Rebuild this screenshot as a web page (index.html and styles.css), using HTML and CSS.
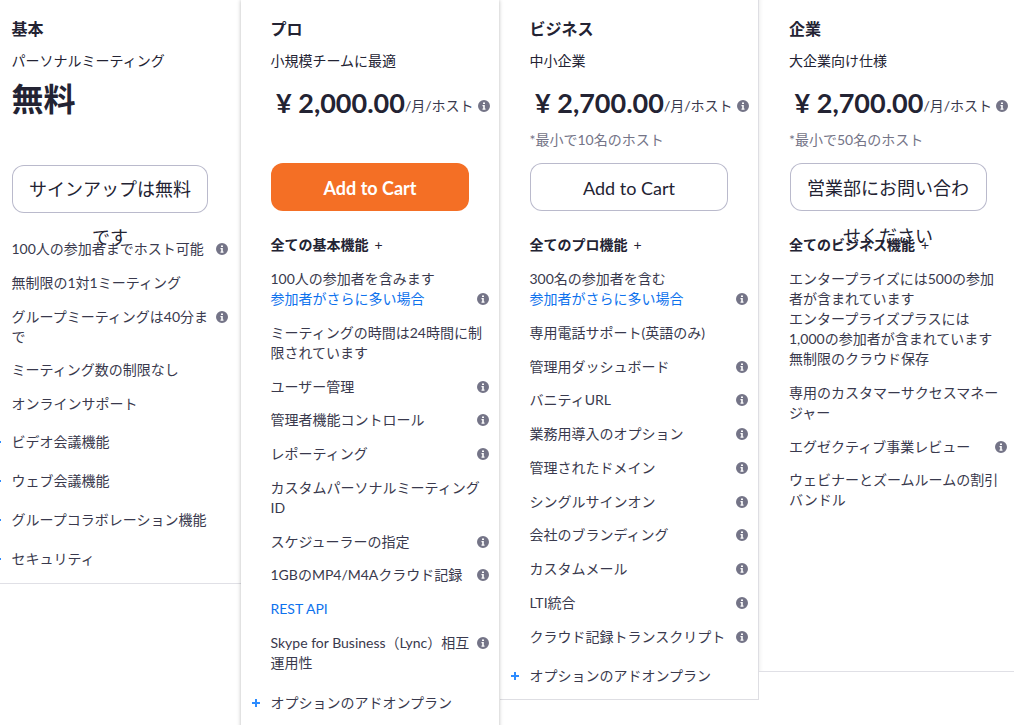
FILE: index.html
```html
<!DOCTYPE html>
<html lang="ja">
<head>
<meta charset="utf-8">
<title>プラン</title>
<link rel="stylesheet" href="styles.css">
</head>
<body>
<svg class="defs" width="0" height="0" aria-hidden="true"><defs>
<symbol id="info" viewBox="0 0 12 12"><path fill-rule="evenodd" d="M6 0a6 6 0 1 1 0 12A6 6 0 0 1 6 0zM5 2.400v1.700h2V2.400zM4.500 5.100v1.100h.7v2.400h-.7v1.100h3v-1.100h-.7V5.100z"/></symbol>
</defs></svg>
<main class="plans">
  <section class="plan plan-basic">
    <h2 class="plan-name">基本</h2>
    <p class="plan-sub">パーソナルミーティング</p>
    <p class="price-free">無料</p>
    <a class="btn btn-basic">サインアップは無料です</a>
    <ul class="features features-basic">
      <li class="row"><span class="row-text">100人の参加者までホスト可能</span><svg class="info"><use href="#info"/></svg></li>
      <li class="row"><span class="row-text">無制限の1対1ミーティング</span></li>
      <li class="row"><span class="row-text">グループミーティングは40分まで</span><svg class="info"><use href="#info"/></svg></li>
      <li class="row"><span class="row-text">ミーティング数の制限なし</span></li>
      <li class="row"><span class="row-text">オンラインサポート</span></li>
    </ul>
    <ul class="addons">
      <li class="addon"><span class="plus"></span>ビデオ会議機能</li>
      <li class="addon"><span class="plus"></span>ウェブ会議機能</li>
      <li class="addon"><span class="plus"></span>グループコラボレーション機能</li>
      <li class="addon"><span class="plus"></span>セキュリティ</li>
    </ul>
  </section>

  <section class="plan plan-pro">
    <h2 class="plan-name">プロ</h2>
    <p class="plan-sub">小規模チームに最適</p>
    <div class="price"><span class="amount">¥ 2,000.00</span><span class="per">/月/ホスト</span><svg class="info"><use href="#info"/></svg></div>
    <div class="note"></div>
    <a class="btn btn-primary">Add to Cart</a>
    <h3 class="all">全ての基本機能<span class="all-plus">+</span></h3>
    <ul class="features">
      <li class="row"><span class="row-text">100人の参加者を含みます<br><span class="link">参加者がさらに多い場合</span></span><svg class="info info-low"><use href="#info"/></svg></li>
      <li class="row"><span class="row-text">ミーティングの時間は24時間に制限されています</span></li>
      <li class="row"><span class="row-text">ユーザー管理</span><svg class="info"><use href="#info"/></svg></li>
      <li class="row"><span class="row-text">管理者機能コントロール</span><svg class="info"><use href="#info"/></svg></li>
      <li class="row"><span class="row-text">レポーティング</span><svg class="info"><use href="#info"/></svg></li>
      <li class="row"><span class="row-text">カスタムパーソナルミーティングID</span></li>
      <li class="row"><span class="row-text">スケジューラーの指定</span><svg class="info"><use href="#info"/></svg></li>
      <li class="row"><span class="row-text">1GBのMP4/M4Aクラウド記録</span><svg class="info"><use href="#info"/></svg></li>
      <li class="row"><span class="row-text link">REST API</span></li>
      <li class="row"><span class="row-text">Skype for Business（Lync）相互運用性</span><svg class="info"><use href="#info"/></svg></li>
    </ul>
    <ul class="addons addons-paid">
      <li class="addon"><span class="plus"></span>オプションのアドオンプラン</li>
    </ul>
  </section>

  <section class="plan plan-business">
    <h2 class="plan-name">ビジネス</h2>
    <p class="plan-sub">中小企業</p>
    <div class="price"><span class="amount">¥ 2,700.00</span><span class="per">/月/ホスト</span><svg class="info"><use href="#info"/></svg></div>
    <div class="note">*最小で10名のホスト</div>
    <a class="btn">Add to Cart</a>
    <h3 class="all">全てのプロ機能<span class="all-plus">+</span></h3>
    <ul class="features">
      <li class="row"><span class="row-text">300名の参加者を含む<br><span class="link">参加者がさらに多い場合</span></span><svg class="info info-low"><use href="#info"/></svg></li>
      <li class="row"><span class="row-text">専用電話サポート(英語のみ)</span></li>
      <li class="row"><span class="row-text">管理用ダッシュボード</span><svg class="info"><use href="#info"/></svg></li>
      <li class="row"><span class="row-text">バニティURL</span><svg class="info"><use href="#info"/></svg></li>
      <li class="row"><span class="row-text">業務用導入のオプション</span><svg class="info"><use href="#info"/></svg></li>
      <li class="row"><span class="row-text">管理されたドメイン</span><svg class="info"><use href="#info"/></svg></li>
      <li class="row"><span class="row-text">シングルサインオン</span><svg class="info"><use href="#info"/></svg></li>
      <li class="row"><span class="row-text">会社のブランディング</span><svg class="info"><use href="#info"/></svg></li>
      <li class="row"><span class="row-text">カスタムメール</span><svg class="info"><use href="#info"/></svg></li>
      <li class="row"><span class="row-text">LTI統合</span><svg class="info"><use href="#info"/></svg></li>
      <li class="row"><span class="row-text">クラウド記録トランスクリプト</span><svg class="info"><use href="#info"/></svg></li>
    </ul>
    <ul class="addons addons-paid">
      <li class="addon"><span class="plus"></span>オプションのアドオンプラン</li>
    </ul>
  </section>

  <section class="plan plan-enterprise">
    <h2 class="plan-name">企業</h2>
    <p class="plan-sub">大企業向け仕様</p>
    <div class="price"><span class="amount">¥ 2,700.00</span><span class="per">/月/ホスト</span><svg class="info"><use href="#info"/></svg></div>
    <div class="note">*最小で50名のホスト</div>
    <a class="btn btn-enterprise">営業部にお問い合わせください</a>
    <h3 class="all">全てのビジネス機能<span class="all-plus">+</span></h3>
    <ul class="features">
      <li class="row"><span class="row-text">エンタープライズには500の参加者が含まれています<br>エンタープライズプラスには<br>1,000の参加者が含まれています<br>無制限のクラウド保存</span></li>
      <li class="row"><span class="row-text">専用のカスタマーサクセスマネージャー</span></li>
      <li class="row"><span class="row-text">エグゼクティブ事業レビュー</span><svg class="info"><use href="#info"/></svg></li>
      <li class="row"><span class="row-text">ウェビナーとズームルームの割引バンドル</span></li>
    </ul>
  </section>
</main>
</body>
</html>
```

FILE: styles.css
```css
* { box-sizing: border-box; }
html, body { margin: 0; height: 725px; overflow: hidden; background: #fff; }
body {
  font-family: Lato, "Noto Sans CJK JP", sans-serif;
  font-size: 14px;
  line-height: 20px;
  color: #232333;
}
.defs { display: block; height: 0; }
ul, h2, h3, p { margin: 0; padding: 0; list-style: none; }

.plans { display: flex; align-items: flex-start; margin-left: -18px; width: 1100px; }
.plan { width: 259px; padding: 19px 0 0 29.500px; flex: none; background: #fff; }
.plan-basic { height: 584px; border-bottom: 1px solid #e0e0e6; }
.plan-pro { height: 760px; position: relative; z-index: 2; box-shadow: 0 0 4px rgba(0, 0, 0, .28); width: 258px; margin-right: 1px; }
.plan-business { height: 700px; width: 259px; border-right: 1px solid #dedee3; border-bottom: 1px solid #dedee3; position: relative; z-index: 1; }
.plan-enterprise { height: 672px; width: 300px; padding-left: 30px; border-bottom: 1px solid #e0e0e6; box-shadow: inset 5px 0 5px -5px rgba(0,0,0,.1); }

.plan-name { font-size: 16px; line-height: 20px; font-weight: 700; }
.plan-sub { margin-top: 12px; }
.price-free { margin-top: 8px; font-size: 32px; line-height: 40px; font-weight: 700; height: 86px; }

.price { display: flex; align-items: center; height: 44px; margin-top: 10px; padding-left: 5.500px; width: 219px; }
.amount { font-size: 27px; font-weight: 700; line-height: 40px; white-space: nowrap; }
.per { color: #39394d; white-space: nowrap; padding-top: 5px; }
.price .info { margin-left: 4px; margin-top: 5px; }
.note { height: 20px; margin-top: 5px; margin-bottom: 13px; color: #747487; }

.btn {
  display: block;
  width: 198px;
  height: 48px;
  line-height: 48px;
  box-shadow: inset 0 0 0 1px #babacc;
  border-radius: 12px;
  font-size: 18px;
  text-align: center;
  padding: 1px 16px 0;
  margin-left: .5px;
  color: #232333;
}
.btn-basic { width: 196px; padding-top: 0; }
.btn-enterprise { width: 197px; margin-left: .5px; }
.btn-primary { background: #f46f25; box-shadow: none; color: #fff; font-weight: 700; }

.all { font-size: 14px; line-height: 20px; font-weight: 700; margin-top: 24px; margin-bottom: 14px; }
.all-plus { font-weight: 400; margin-left: 6px; }
.features-basic { margin-top: 26px; }

.row { display: flex; align-items: flex-start; margin-bottom: 13.780px; width: 218px; color: #39394d; }
.plan-basic .row { width: 216px; }
.row-text { flex: 1; min-width: 0; }
.link { color: #0e72ed; }
.info { width: 12px; height: 12px; fill: #747487; flex: none; }
.row > .info { margin-top: 4px; }
.row > .info.info-low { margin-top: 24px; }

.addons { margin-top: 18px; }
.addons-paid { margin-top: 19.800px; }
.addon { display: flex; align-items: center; height: 20px; margin-bottom: 19px; color: #39394d; }
.plus { position: relative; flex: none; width: 8px; height: 8px; margin: 0 11px 0 -19px; }
.plus::before, .plus::after { content: ""; position: absolute; background: #2d8cff; }
.plus::before { left: 0; right: 0; top: 3px; height: 2px; }
.plus::after { top: 0; bottom: 0; left: 3px; width: 2px; }
```
